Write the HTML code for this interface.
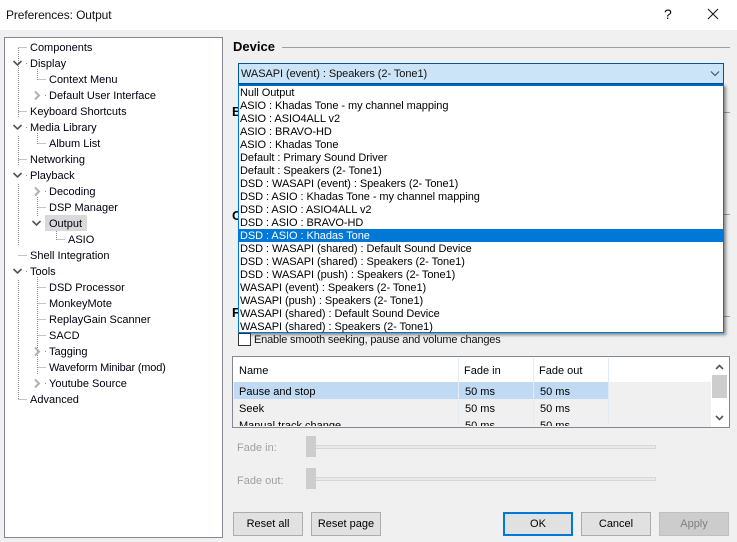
<!DOCTYPE html>
<html><head><meta charset="utf-8"><style>
html,body{margin:0;padding:0}
body{width:737px;height:542px;overflow:hidden;background:#f0f0f0;position:relative;font:11px/16px "Liberation Sans",sans-serif;color:#000}
div,span{position:absolute;box-sizing:border-box;white-space:nowrap}
.t{height:16px;line-height:16px;color:#001;margin-top:1px}
.r{left:3px;height:13px;line-height:13px;letter-spacing:-.06px;margin-top:1px}
.h{font-weight:bold;font-size:13px;line-height:16px}
.b{height:24px;border:1px solid #adadad;background:#e1e1e1;text-align:center;line-height:23px;width:70px;top:512px}
.c{height:15px;line-height:15px;margin-top:1px}
</style></head><body>
<div style="left:0;top:0;width:737px;height:30px;background:#fff"></div>
<div style="left:6px;top:7px;font-size:12px;letter-spacing:-.1px;line-height:16px;color:#111">Preferences: Output</div>
<div style="left:664px;top:6px;font-size:14px;line-height:16px">?</div>
<svg style="position:absolute;left:0;top:0" width="737" height="542">
<path d="M708 9l10 10M718 9l-10 10" stroke="#111" fill="none"/>
</svg>

<div style="left:4px;top:37px;width:219px;height:501px;background:#fff;border:1px solid #828790"></div>
<svg style="position:absolute;left:0;top:0" width="230" height="420" shape-rendering="crispEdges">
<g stroke="#8a8a8a" stroke-dasharray="1 1" fill="none">
<path d="M18.5 48V118M18.5 136V166M18.5 184V246M18.5 280V400M18.5 47.5H27M18.5 111.5H27M18.5 159.5H27M18.5 255.5H27M18.5 399.5H27"/>
<path d="M26 63.5h2M26 127.5h2M26 175.5h2M26 271.5h2"/>
<path d="M37.5 69V80M37.5 79.5H46M37.5 133V144M37.5 143.5H46"/>
<path d="M45 95.5h2M45 191.5h2M45 223.5h2M45 351.5h2M45 383.5h2"/>
<path d="M37.5 197V216M37.5 207.5H46M37.5 277V374M37.5 287.5H46M37.5 303.5H46M37.5 319.5H46M37.5 335.5H46M37.5 367.5H46"/>
<path d="M56.5 229V240M56.5 239.5H65"/>
</g></svg>
<svg style="position:absolute;left:0;top:0" width="230" height="420">
<g fill="none" stroke="#555" stroke-width="1.6">
<path d="M13.5 61l4 4 4-4M13.5 125l4 4 4-4M13.5 173l4 4 4-4M13.5 269l4 4 4-4M32.5 221l4 4 4-4"/>
</g>
<g fill="none" stroke="#b0b0b0" stroke-width="2">
<path d="M35 91.5l4 4-4 4M35 187.5l4 4-4 4M35 347.5l4 4-4 4M35 379.5l4 4-4 4"/>
</g></svg>
<div style="left:45px;top:215px;width:42px;height:16px;background:#d9d9d9"></div>
<div class="t" style="left:30px;top:39px">Components</div>
<div class="t" style="left:30px;top:55px">Display</div>
<div class="t" style="left:49px;top:71px">Context Menu</div>
<div class="t" style="left:49px;top:87px">Default User Interface</div>
<div class="t" style="left:30px;top:103px">Keyboard Shortcuts</div>
<div class="t" style="left:30px;top:119px">Media Library</div>
<div class="t" style="left:49px;top:135px">Album List</div>
<div class="t" style="left:30px;top:151px">Networking</div>
<div class="t" style="left:30px;top:167px">Playback</div>
<div class="t" style="left:49px;top:183px">Decoding</div>
<div class="t" style="left:49px;top:199px">DSP Manager</div>
<div class="t" style="left:49px;top:215px">Output</div>
<div class="t" style="left:68px;top:231px">ASIO</div>
<div class="t" style="left:30px;top:247px">Shell Integration</div>
<div class="t" style="left:30px;top:263px">Tools</div>
<div class="t" style="left:49px;top:279px">DSD Processor</div>
<div class="t" style="left:49px;top:295px">MonkeyMote</div>
<div class="t" style="left:49px;top:311px">ReplayGain Scanner</div>
<div class="t" style="left:49px;top:327px">SACD</div>
<div class="t" style="left:49px;top:343px">Tagging</div>
<div class="t" style="left:49px;top:359px;letter-spacing:-.18px">Waveform Minibar (mod)</div>
<div class="t" style="left:49px;top:375px">Youtube Source</div>
<div class="t" style="left:30px;top:391px">Advanced</div>

<div class="h" style="left:233px;top:39px">Device</div>
<div style="left:282px;top:47px;width:448px;height:1px;background:#a0a0a0"></div>
<div style="left:723px;top:112px;width:7px;height:1px;background:#a0a0a0"></div>
<div style="left:723px;top:214px;width:7px;height:1px;background:#a0a0a0"></div>
<div style="left:723px;top:316px;width:7px;height:1px;background:#a0a0a0"></div>
<div class="h" style="left:232px;top:104px">B</div>
<div class="h" style="left:232px;top:208px">O</div>
<div class="h" style="left:232px;top:305px">F</div>

<div style="left:238px;top:63px;width:486px;height:21px;background:#cce4f7;border:1px solid #005499"></div>
<div style="left:241px;top:67px;line-height:15px;color:#111;letter-spacing:-.06px">WASAPI (event) : Speakers (2- Tone1)</div>
<svg style="position:absolute;left:710px;top:70px" width="12" height="8"><path d="M1 1.5l4 4 4-4" fill="none" stroke="#555" stroke-width="1.2"/></svg>

<div style="left:238px;top:84px;width:486px;height:249px;background:#fff;border:1px solid #0078d7;border-top:2px solid #0066c0;box-shadow:2px 2px 3px rgba(0,0,0,.45)"></div>
<div style="left:239px;top:86px;width:484px;height:246px">
<div class="r" style="left:1px;top:0">Null Output</div>
<div class="r" style="left:1px;top:13px">ASIO : Khadas Tone - my channel mapping</div>
<div class="r" style="left:1px;top:26px">ASIO : ASIO4ALL v2</div>
<div class="r" style="left:1px;top:39px">ASIO : BRAVO-HD</div>
<div class="r" style="left:1px;top:52px">ASIO : Khadas Tone</div>
<div class="r" style="left:1px;top:65px">Default : Primary Sound Driver</div>
<div class="r" style="left:1px;top:78px">Default : Speakers (2- Tone1)</div>
<div class="r" style="left:1px;top:91px">DSD : WASAPI (event) : Speakers (2- Tone1)</div>
<div class="r" style="left:1px;top:104px">DSD : ASIO : Khadas Tone - my channel mapping</div>
<div class="r" style="left:1px;top:117px">DSD : ASIO : ASIO4ALL v2</div>
<div class="r" style="left:1px;top:130px">DSD : ASIO : BRAVO-HD</div>
<div style="left:0;top:143px;width:484px;height:13px;background:#0078d7"></div>
<div class="r" style="left:1px;top:143px;color:#fff">DSD : ASIO : Khadas Tone</div>
<div class="r" style="left:1px;top:156px">DSD : WASAPI (shared) : Default Sound Device</div>
<div class="r" style="left:1px;top:169px">DSD : WASAPI (shared) : Speakers (2- Tone1)</div>
<div class="r" style="left:1px;top:182px">DSD : WASAPI (push) : Speakers (2- Tone1)</div>
<div class="r" style="left:1px;top:195px">WASAPI (event) : Speakers (2- Tone1)</div>
<div class="r" style="left:1px;top:208px">WASAPI (push) : Speakers (2- Tone1)</div>
<div class="r" style="left:1px;top:221px">WASAPI (shared) : Default Sound Device</div>
<div class="r" style="left:1px;top:234px;height:12px;overflow:hidden">WASAPI (shared) : Speakers (2- Tone1)</div>
</div>

<div style="left:238px;top:333px;width:13px;height:13px;background:#fff;border:1px solid #333"></div>
<div style="left:254px;top:332px;line-height:16px;color:#111;letter-spacing:-.18px">Enable smooth seeking, pause and volume changes</div>

<div style="left:232px;top:356px;width:498px;height:72px;background:#f0f0f0;border:1px solid #828790;overflow:hidden"></div>
<div style="left:233px;top:357px;width:478px;height:25px;background:#fff"></div>
<div style="left:711px;top:357px;width:18px;height:70px;background:#fff"></div>
<div style="left:234px;top:382px;width:375px;height:17px;background:#bfdaf2"></div>
<div style="left:458px;top:358px;width:1px;height:67px;background:#e3ebf3"></div>
<div style="left:533px;top:358px;width:1px;height:67px;background:#e3ebf3"></div>
<div style="left:608px;top:358px;width:1px;height:67px;background:#e3ebf3"></div>
<div class="c" style="left:239px;top:363px">Name</div>
<div class="c" style="left:464px;top:363px">Fade in</div>
<div class="c" style="left:539px;top:363px">Fade out</div>
<div class="c" style="left:239px;top:384px">Pause and stop</div>
<div class="c" style="left:465px;top:384px">50 ms</div>
<div class="c" style="left:540px;top:384px">50 ms</div>
<div class="c" style="left:239px;top:401px">Seek</div>
<div class="c" style="left:465px;top:401px">50 ms</div>
<div class="c" style="left:540px;top:401px">50 ms</div>
<div style="left:233px;top:418px;width:476px;height:8px;overflow:hidden">
<div class="c" style="left:6px;top:0">Manual track change</div>
<div class="c" style="left:232px;top:0">50 ms</div>
<div class="c" style="left:307px;top:0">50 ms</div>
</div>
<div style="left:712px;top:375px;width:15px;height:23px;background:#cdcdcd"></div>
<svg style="position:absolute;left:712px;top:362px" width="16" height="62"><path d="M4 7l3.5-3.5 3.5 3.5M4 54l3.5 3.5 3.5-3.5" fill="none" stroke="#555" stroke-width="1.6"/></svg>

<div style="left:237px;top:440px;line-height:16px;color:#a0a0a0">Fade in:</div>
<div style="left:237px;top:473px;line-height:16px;color:#a0a0a0">Fade out:</div>
<div style="left:315px;top:445px;width:341px;height:4px;background:#e7eae7;border:1px solid #d6d6d6"></div>
<div style="left:315px;top:477px;width:341px;height:4px;background:#e7eae7;border:1px solid #d6d6d6"></div>
<div style="left:306px;top:436px;width:10px;height:21px;background:#cdcdcd"></div>
<div style="left:306px;top:468px;width:10px;height:21px;background:#cdcdcd"></div>

<div class="b" style="left:233px">Reset all</div>
<div class="b" style="left:311px">Reset page</div>
<div class="b" style="left:503px;border:2px solid #0078d7;line-height:21px">OK</div>
<div class="b" style="left:581px">Cancel</div>
<div class="b" style="left:659px;background:#ccc;border-color:#bfbfbf;color:#808080">Apply</div>
</body></html>
